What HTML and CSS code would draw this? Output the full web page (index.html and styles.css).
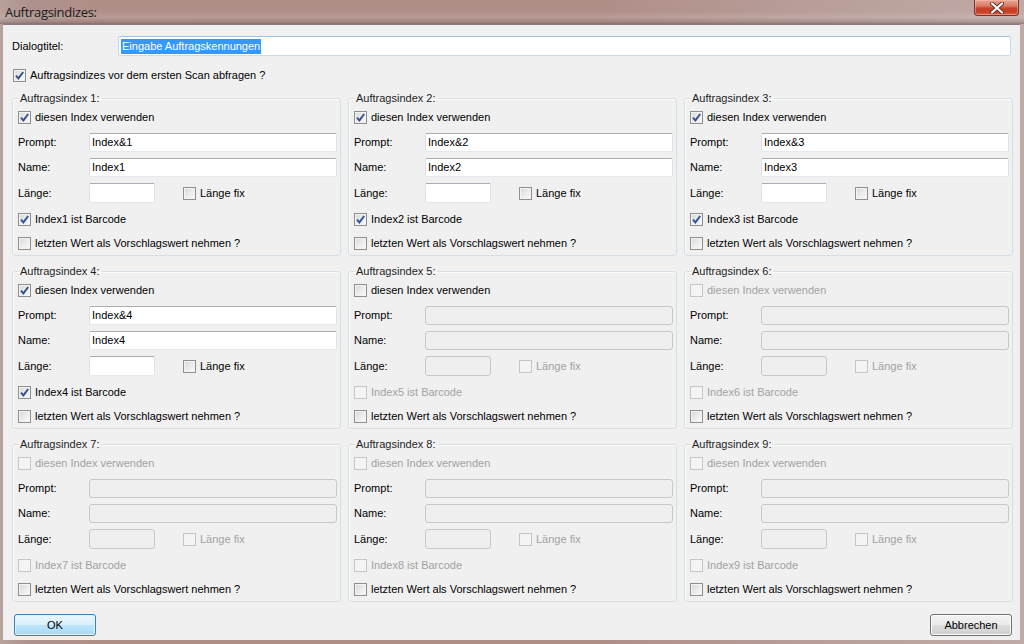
FILE: index.html
```html
<!DOCTYPE html>
<html lang="de">
<head>
<meta charset="utf-8">
<title>Auftragsindizes</title>
<link rel="stylesheet" href="styles.css">
</head>
<body>
<div class="window">
  <div class="titlebar">
    <span class="title">Auftragsindizes:</span>
    <div class="closebtn">
      <svg width="20" height="12" viewBox="0 0 20 12"><path d="M5 1.5 L15 10.5 M15 1.5 L5 10.5" stroke="#6b2a1e" stroke-width="4" stroke-linecap="round"/><path d="M5 1.5 L15 10.5 M15 1.5 L5 10.5" stroke="#fff" stroke-width="2.2" stroke-linecap="round"/></svg>
    </div>
  </div>
  <div class="client">
    <div class="toprow">
      <span class="toplabel">Dialogtitel:</span>
      <div class="tb tb-focus"><span class="sel">Eingabe Auftragskennungen</span></div>
    </div>
    <div class="cbrow top-cb"><span class="cb checked"></span><span>Auftragsindizes vor dem ersten Scan abfragen ?</span></div>

    <div class="groups">
      <fieldset class="group">
        <legend>Auftragsindex 1:</legend>
        <div class="cbrow r1"><span class="cb checked"></span><span>diesen Index verwenden</span></div>
        <div class="frow r2"><span class="lbl">Prompt:</span><div class="tb">Index&amp;1</div></div>
        <div class="frow r3"><span class="lbl">Name:</span><div class="tb">Index1</div></div>
        <div class="frow r4"><span class="lbl">Länge:</span><div class="tb short"></div><div class="cbrow fix"><span class="cb"></span><span>Länge fix</span></div></div>
        <div class="cbrow r5"><span class="cb checked"></span><span>Index1 ist Barcode</span></div>
        <div class="cbrow r6"><span class="cb"></span><span>letzten Wert als Vorschlagswert nehmen ?</span></div>
      </fieldset>
      <fieldset class="group">
        <legend>Auftragsindex 2:</legend>
        <div class="cbrow r1"><span class="cb checked"></span><span>diesen Index verwenden</span></div>
        <div class="frow r2"><span class="lbl">Prompt:</span><div class="tb">Index&amp;2</div></div>
        <div class="frow r3"><span class="lbl">Name:</span><div class="tb">Index2</div></div>
        <div class="frow r4"><span class="lbl">Länge:</span><div class="tb short"></div><div class="cbrow fix"><span class="cb"></span><span>Länge fix</span></div></div>
        <div class="cbrow r5"><span class="cb checked"></span><span>Index2 ist Barcode</span></div>
        <div class="cbrow r6"><span class="cb"></span><span>letzten Wert als Vorschlagswert nehmen ?</span></div>
      </fieldset>
      <fieldset class="group">
        <legend>Auftragsindex 3:</legend>
        <div class="cbrow r1"><span class="cb checked"></span><span>diesen Index verwenden</span></div>
        <div class="frow r2"><span class="lbl">Prompt:</span><div class="tb">Index&amp;3</div></div>
        <div class="frow r3"><span class="lbl">Name:</span><div class="tb">Index3</div></div>
        <div class="frow r4"><span class="lbl">Länge:</span><div class="tb short"></div><div class="cbrow fix"><span class="cb"></span><span>Länge fix</span></div></div>
        <div class="cbrow r5"><span class="cb checked"></span><span>Index3 ist Barcode</span></div>
        <div class="cbrow r6"><span class="cb"></span><span>letzten Wert als Vorschlagswert nehmen ?</span></div>
      </fieldset>

      <fieldset class="group">
        <legend>Auftragsindex 4:</legend>
        <div class="cbrow r1"><span class="cb checked"></span><span>diesen Index verwenden</span></div>
        <div class="frow r2"><span class="lbl">Prompt:</span><div class="tb">Index&amp;4</div></div>
        <div class="frow r3"><span class="lbl">Name:</span><div class="tb">Index4</div></div>
        <div class="frow r4"><span class="lbl">Länge:</span><div class="tb short"></div><div class="cbrow fix"><span class="cb"></span><span>Länge fix</span></div></div>
        <div class="cbrow r5"><span class="cb checked"></span><span>Index4 ist Barcode</span></div>
        <div class="cbrow r6"><span class="cb"></span><span>letzten Wert als Vorschlagswert nehmen ?</span></div>
      </fieldset>
      <fieldset class="group">
        <legend>Auftragsindex 5:</legend>
        <div class="cbrow r1"><span class="cb"></span><span>diesen Index verwenden</span></div>
        <div class="frow r2"><span class="lbl">Prompt:</span><div class="tb dis"></div></div>
        <div class="frow r3"><span class="lbl">Name:</span><div class="tb dis"></div></div>
        <div class="frow r4"><span class="lbl">Länge:</span><div class="tb short dis"></div><div class="cbrow fix disabled"><span class="cb"></span><span>Länge fix</span></div></div>
        <div class="cbrow r5 disabled"><span class="cb"></span><span>Index5 ist Barcode</span></div>
        <div class="cbrow r6"><span class="cb"></span><span>letzten Wert als Vorschlagswert nehmen ?</span></div>
      </fieldset>
      <fieldset class="group">
        <legend>Auftragsindex 6:</legend>
        <div class="cbrow r1 disabled"><span class="cb"></span><span>diesen Index verwenden</span></div>
        <div class="frow r2"><span class="lbl">Prompt:</span><div class="tb dis"></div></div>
        <div class="frow r3"><span class="lbl">Name:</span><div class="tb dis"></div></div>
        <div class="frow r4"><span class="lbl">Länge:</span><div class="tb short dis"></div><div class="cbrow fix disabled"><span class="cb"></span><span>Länge fix</span></div></div>
        <div class="cbrow r5 disabled"><span class="cb"></span><span>Index6 ist Barcode</span></div>
        <div class="cbrow r6"><span class="cb"></span><span>letzten Wert als Vorschlagswert nehmen ?</span></div>
      </fieldset>

      <fieldset class="group">
        <legend>Auftragsindex 7:</legend>
        <div class="cbrow r1 disabled"><span class="cb"></span><span>diesen Index verwenden</span></div>
        <div class="frow r2"><span class="lbl">Prompt:</span><div class="tb dis"></div></div>
        <div class="frow r3"><span class="lbl">Name:</span><div class="tb dis"></div></div>
        <div class="frow r4"><span class="lbl">Länge:</span><div class="tb short dis"></div><div class="cbrow fix disabled"><span class="cb"></span><span>Länge fix</span></div></div>
        <div class="cbrow r5 disabled"><span class="cb"></span><span>Index7 ist Barcode</span></div>
        <div class="cbrow r6"><span class="cb"></span><span>letzten Wert als Vorschlagswert nehmen ?</span></div>
      </fieldset>
      <fieldset class="group">
        <legend>Auftragsindex 8:</legend>
        <div class="cbrow r1 disabled"><span class="cb"></span><span>diesen Index verwenden</span></div>
        <div class="frow r2"><span class="lbl">Prompt:</span><div class="tb dis"></div></div>
        <div class="frow r3"><span class="lbl">Name:</span><div class="tb dis"></div></div>
        <div class="frow r4"><span class="lbl">Länge:</span><div class="tb short dis"></div><div class="cbrow fix disabled"><span class="cb"></span><span>Länge fix</span></div></div>
        <div class="cbrow r5 disabled"><span class="cb"></span><span>Index8 ist Barcode</span></div>
        <div class="cbrow r6"><span class="cb"></span><span>letzten Wert als Vorschlagswert nehmen ?</span></div>
      </fieldset>
      <fieldset class="group">
        <legend>Auftragsindex 9:</legend>
        <div class="cbrow r1 disabled"><span class="cb"></span><span>diesen Index verwenden</span></div>
        <div class="frow r2"><span class="lbl">Prompt:</span><div class="tb dis"></div></div>
        <div class="frow r3"><span class="lbl">Name:</span><div class="tb dis"></div></div>
        <div class="frow r4"><span class="lbl">Länge:</span><div class="tb short dis"></div><div class="cbrow fix disabled"><span class="cb"></span><span>Länge fix</span></div></div>
        <div class="cbrow r5 disabled"><span class="cb"></span><span>Index9 ist Barcode</span></div>
        <div class="cbrow r6"><span class="cb"></span><span>letzten Wert als Vorschlagswert nehmen ?</span></div>
      </fieldset>
    </div>

    <div class="buttons">
      <div class="btn btn-default">OK</div>
      <div class="btn">Abbrechen</div>
    </div>
  </div>
</div>
</body>
</html>
```

FILE: styles.css
```css
* { box-sizing: border-box; }
html, body { margin: 0; padding: 0; }
body {
  width: 1024px;
  height: 644px;
  overflow: hidden;
  font-family: "Liberation Sans", Arial, sans-serif;
  font-size: 11px;
  color: #000;
  background: #a88e89;
}
.window {
  width: 1024px;
  height: 644px;
  display: flex;
  flex-direction: column;
  background: linear-gradient(90deg, #b9a19d 0px, #ad918c 30px, #b18f89 90px, #b08e88 600px, #b89d98 800px, #c0aaa6 1024px);
}
.titlebar {
  height: 24px;
  flex: none;
  display: flex;
  align-items: flex-start;
  justify-content: space-between;
  background: linear-gradient(180deg, rgba(255,255,255,0) 0px, rgba(255,255,255,0) 12px, rgba(255,255,255,0.12) 17px, rgba(120,100,98,0.25) 22px, rgba(90,80,80,0.5) 24px);
}
.title {
  font-family: "Open Sans", "Liberation Sans", sans-serif;
  font-size: 13px;
  letter-spacing: -0.3px;
  color: #1a1a1a;
  padding: 3px 0 0 5px;
}
.closebtn {
  width: 45px;
  height: 16px;
  margin-right: 5px;
  border: 1px solid #7a3226;
  border-top: none;
  border-radius: 0 0 4px 4px;
  background: linear-gradient(180deg, #e8a595 0%, #d97a63 40%, #c4432a 55%, #c93f24 80%, #db6a4c 100%);
  display: flex;
  align-items: center;
  justify-content: center;
  box-shadow: inset 0 0 0 1px rgba(255,200,190,0.45);
}
.closebtn svg { display: block; }
.client {
  flex: 1;
  margin: 0 4px 4px 3px;
  background: #f0f0f0;
  padding: 11px 0 0 9px;
  border-top: 1px solid #8b7a77;
}
.toprow {
  display: flex;
  align-items: center;
  height: 20px;
}
.toplabel { width: 106px; flex: none; }
.tb {
  height: 20px;
  flex: 1;
  background: #fff;
  border: 1px solid;
  border-color: #abadb3 #e2e3ea #e3e9ef #dbdfe6;
  border-radius: 2px;
  padding: 0 2px;
  line-height: 18px;
  white-space: nowrap;
  overflow: hidden;
}
.toprow .tb { margin-right: 9px; }
.tb-focus {
  border-color: #a3c1da #c5daed #c9ddee #c5daed;
  padding-left: 2px;
}
.sel {
  background: #3399ff;
  color: #fff;
  padding: 1px 1px 2px 1px;
}
.cbrow {
  display: flex;
  align-items: center;
  height: 20px;
  gap: 4px;
  white-space: nowrap;
}
.top-cb { margin-top: 9px; padding-left: 1px; }
.cb {
  width: 13px;
  height: 13px;
  flex: none;
  border: 1px solid #8f8f8f;
  background: linear-gradient(135deg, #d6d6d6 0%, #e9e9e9 45%, #fbfbfb 100%);
  box-shadow: inset 0 0 0 1px #f3f3f3;
}
.cb.checked {
  background:
    url("data:image/svg+xml;utf8,<svg xmlns='http://www.w3.org/2000/svg' width='11' height='11' viewBox='0 0 11 11'><path d='M2 5.6 L4.4 8.4 L9.2 2' fill='none' stroke='%2333508f' stroke-width='1.9'/></svg>") center/11px 11px no-repeat,
    linear-gradient(135deg, #d6d6d6 0%, #e9e9e9 45%, #fbfbfb 100%);
}
.disabled { color: #a2a2a2; }
.disabled .cb {
  border-color: #c6c6c6;
  background: #f4f4f4;
  box-shadow: none;
}
.groups {
  display: grid;
  grid-template-columns: repeat(3, 329px);
  column-gap: 7px;
  row-gap: 8px;
  margin-top: 6px;
}
.group {
  margin: 0;
  padding: 0 0 3px 0;
  border: 1px solid #d5dfe5;
  border-radius: 3px;
  box-shadow: inset 1px 1px 0 #fbfbfb;
  min-width: 0;
  height: 165px;
}
.group legend {
  padding: 0 2px 0 1px;
  margin-left: 6px;
  line-height: 14px;
  height: 14px;
  color: #1e1e1e;
}
.group .cbrow { padding-left: 5px; }
.group .cbrow.fix { padding-left: 0; margin-left: 28px; }
.frow {
  display: flex;
  align-items: center;
  height: 20px;
  padding-left: 5px;
  padding-right: 3px;
}
.lbl { width: 71px; flex: none; }
.frow .tb { height: 19px; line-height: 17px; }
.tb.short { flex: none; width: 66px; height: 20px; }
.tb.dis {
  background: #efefef;
  border-color: #c8c8c8;
  border-radius: 3px;
}
.r1 { margin-top: 2px; }
.r2 { margin-top: 5px; }
.r3 { margin-top: 5px; }
.r4 { margin-top: 6px; }
.r5 { margin-top: 6px; }
.r6 { margin-top: 4px; }
.buttons {
  display: flex;
  justify-content: space-between;
  margin-top: 12px;
  padding: 0 8px 0 2px;
}
.btn {
  width: 82px;
  height: 22px;
  border: 1px solid #707070;
  border-radius: 3px;
  background: linear-gradient(180deg, #f2f2f2 0%, #ebebeb 49%, #dddddd 50%, #cfcfcf 100%);
  box-shadow: inset 0 0 0 1px #fcfcfc;
  display: flex;
  align-items: center;
  justify-content: center;
}
.btn-default {
  border-color: #3c7fb1;
  background: linear-gradient(180deg, #eaf6fd 0%, #d9f0fc 49%, #bee6fd 50%, #a7d9f5 100%);
  box-shadow: inset 0 0 0 1px #dff2fd;
}
```
